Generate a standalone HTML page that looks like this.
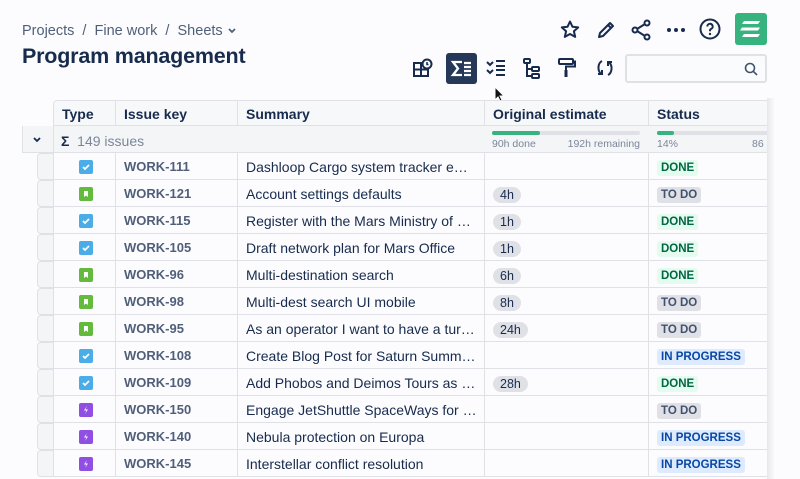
<!DOCTYPE html>
<html><head><meta charset="utf-8"><style>
*{box-sizing:border-box;margin:0;padding:0}
body{width:800px;height:479px;overflow:hidden;background:#fcfcfe;font-family:"Liberation Sans",sans-serif;color:#172b4d;position:relative}
.a{position:absolute}
.crumb{left:22px;top:23px;font-size:14.5px;color:#505f79}
h1{position:absolute;left:22px;top:44px;font-size:21.5px;font-weight:bold;color:#172b4d;letter-spacing:-0.2px}
.cell{position:absolute;height:27px;border-right:1px solid #dfe1e6;border-bottom:1px solid #dfe1e6;font-size:14px;line-height:28px;padding-left:8px;padding-right:6px;white-space:nowrap;overflow:hidden;text-overflow:ellipsis;background:#fcfcfe}
.hd{background:#f7f8fa;font-weight:bold;color:#172b4d;height:26px;line-height:27px}
.key{color:#505f79;font-weight:bold;font-size:13px;padding-left:8px}
.pill{display:inline-block;background:#dfe1e6;border-radius:8px;font-size:12.5px;line-height:16px;padding:0 7px;color:#172b4d;vertical-align:middle}
.loz{display:inline-block;font-size:11.5px;font-weight:bold;line-height:16px;padding:0 4px;border-radius:3px;vertical-align:middle}
.done{background:#e3fcef;color:#006644}
.todo{background:#dfe1e6;color:#42526e}
.prog{background:#deebff;color:#0747a6}
.ic{position:absolute;left:25px;top:7px;width:14px;height:14px;border-radius:2px}
.ic svg{display:block}
.t{background:#4bade8}.s{background:#63ba3c}.e{background:#904ee2}
.gut{position:absolute;left:37px;width:17px;height:27px;background:#f4f5f7;border:1px solid #dfe1e6;border-right:none;border-radius:4px 0 0 4px}
</style></head><body>
<div class="a crumb">Projects &nbsp;/&nbsp; Fine work &nbsp;/&nbsp; Sheets <svg width="10" height="8" viewBox="0 0 10 8"><path d="M2 2l3 3 3-3" stroke="#505f79" stroke-width="1.8" fill="none"/></svg></div>
<h1>Program management</h1>
<svg class="a" style="left:558px;top:18px" width="24" height="24" viewBox="0 0 24 24"><path d="M12 3.5l2.5 5.3 5.7.6-4.3 3.9 1.3 5.6L12 16l-5.2 2.9 1.3-5.6-4.3-3.9 5.7-.6z" fill="none" stroke="#172b4d" stroke-width="2" stroke-linejoin="round"/></svg>
<svg class="a" style="left:594px;top:18px" width="24" height="24" viewBox="0 0 24 24"><path d="M5 19l1-4L16 5l3 3L9 18z M14 7l3 3" fill="none" stroke="#172b4d" stroke-width="2" stroke-linejoin="round"/></svg>
<svg class="a" style="left:629px;top:18px" width="24" height="24" viewBox="0 0 24 24"><circle cx="6" cy="12" r="2.5" fill="none" stroke="#172b4d" stroke-width="2"/><circle cx="18" cy="5" r="2.5" fill="none" stroke="#172b4d" stroke-width="2"/><circle cx="18" cy="19" r="2.5" fill="none" stroke="#172b4d" stroke-width="2"/><path d="M8 11l8-5M8 13l8 5" stroke="#172b4d" stroke-width="2"/></svg>
<svg class="a" style="left:664px;top:18px" width="24" height="24" viewBox="0 0 24 24"><circle cx="5" cy="12" r="2" fill="#172b4d"/><circle cx="12" cy="12" r="2" fill="#172b4d"/><circle cx="19" cy="12" r="2" fill="#172b4d"/></svg>
<svg class="a" style="left:698px;top:17px" width="24" height="24" viewBox="0 0 24 24"><circle cx="12" cy="12" r="9.5" fill="none" stroke="#172b4d" stroke-width="2"/><path d="M9.3 9.5a2.7 2.7 0 1 1 3.7 2.5c-.7.3-1 .8-1 1.6v.6" fill="none" stroke="#172b4d" stroke-width="2"/><circle cx="12" cy="17" r="1.2" fill="#172b4d"/></svg>
<div class="a" style="left:735px;top:13px;width:32px;height:32px;background:#36b37e;border-radius:3px"><svg width="32" height="32" viewBox="0 0 32 32"><path d="M9 8h16l-2 3H7zM7 14.5h18l-2 3H5zM9 21h16l-2 3H7z" fill="#fff"/></svg></div>
<svg class="a" style="left:412px;top:57px" width="22" height="22" viewBox="0 0 22 22"><path d="M2 6h7v13H2zM2 12.5h14V19H9" fill="none" stroke="#172b4d" stroke-width="2"/><circle cx="15" cy="7" r="4.5" fill="none" stroke="#172b4d" stroke-width="2"/><path d="M15 5v2.5h1.5" stroke="#172b4d" stroke-width="1.5" fill="none"/></svg>
<div class="a" style="left:446px;top:53px;width:31px;height:31px;background:#253858;border-radius:3px"><svg width="31" height="31" viewBox="0 0 31 31"><path d="M16 9H7l5 6.5L7 22h9" fill="none" stroke="#fff" stroke-width="2.3"/><path d="M18 10h7M18 14h7M18 18h7M18 22h7" stroke="#fff" stroke-width="2.3"/></svg></div>
<svg class="a" style="left:484px;top:57px" width="24" height="22" viewBox="0 0 24 22"><path d="M3 5l3 3 3-3M3 13l3 3 3-3" fill="none" stroke="#172b4d" stroke-width="2"/><path d="M12 4h9M12 9h9M12 13h9M12 18h9" stroke="#172b4d" stroke-width="2"/></svg>
<svg class="a" style="left:521px;top:56px" width="22" height="24" viewBox="0 0 22 24"><rect x="3" y="3" width="6" height="4" rx="1" fill="none" stroke="#172b4d" stroke-width="2"/><path d="M6 7v13h5M6 13h5" fill="none" stroke="#172b4d" stroke-width="2"/><rect x="11" y="11" width="7" height="4" rx="1" fill="none" stroke="#172b4d" stroke-width="2"/><rect x="11" y="18" width="7" height="4" rx="1" fill="none" stroke="#172b4d" stroke-width="2"/></svg>
<svg class="a" style="left:556px;top:56px" width="22" height="24" viewBox="0 0 22 24"><rect x="3" y="3" width="14" height="5" rx="1" fill="none" stroke="#172b4d" stroke-width="2"/><path d="M17 5.5h2v5H10v4" fill="none" stroke="#172b4d" stroke-width="2"/><rect x="8.5" y="14" width="3" height="7" fill="#172b4d"/></svg>
<svg class="a" style="left:594px;top:57px" width="22" height="22" viewBox="0 0 22 22"><path d="M8 4C4 6 3 13 7 17M14 18c4-2 5-9 1-13" fill="none" stroke="#172b4d" stroke-width="2"/><path d="M4 17h4v-4M18 5h-4v4" fill="none" stroke="#172b4d" stroke-width="2"/></svg>
<div class="a" style="left:625px;top:54px;width:142px;height:29px;border:2px solid #dfe1e6;border-radius:3px;background:#fafbfc"><svg style="position:absolute;right:7px;top:6px" width="14" height="14" viewBox="0 0 14 14"><circle cx="6" cy="6" r="4.5" fill="none" stroke="#42526e" stroke-width="1.6"/><path d="M9.3 9.3L13 13" stroke="#42526e" stroke-width="1.6"/></svg></div>
<svg class="a" style="left:494px;top:86px" width="12" height="18" viewBox="0 0 12 18"><path d="M1 1v13l3-3 2.5 5 2-1L6 10h4z" fill="#111" stroke="#fff" stroke-width="1"/></svg>
<div id="tb"></div>
<div class="a" style="left:767px;top:98px;width:33px;height:381px;background:linear-gradient(90deg,#e6e7ea,#fcfcfe 8px)"></div>
<div class="cell hd" style="left:53px;top:100px;width:63px;border-top:1px solid #dfe1e6;border-left:1px solid #dfe1e6;border-top-left-radius:4px">Type</div>
<div class="cell hd" style="left:116px;top:100px;width:122px;border-top:1px solid #dfe1e6">Issue key</div>
<div class="cell hd" style="left:238px;top:100px;width:247px;border-top:1px solid #dfe1e6">Summary</div>
<div class="cell hd" style="left:485px;top:100px;width:164px;border-top:1px solid #dfe1e6">Original estimate</div>
<div class="cell hd" style="left:649px;top:100px;width:118px;border-top:1px solid #dfe1e6;border-right:none">Status</div>
<div class="a" style="left:22px;top:126px;width:745px;height:27px;background:#f4f5f7;border-bottom:1px solid #dfe1e6;border-left:1px solid #dfe1e6"></div>
<div class="a" style="left:53px;top:126px;width:1px;height:27px;background:#dfe1e6"></div>
<svg class="a" style="left:32px;top:136px" width="10" height="8" viewBox="0 0 10 8"><path d="M2 2l3 3 3-3" stroke="#172b4d" stroke-width="1.8" fill="none"/></svg>
<div class="a" style="left:61px;top:133px;font-size:14px;color:#7a869a"><b style="color:#172b4d">Σ</b>&nbsp; 149 issues</div>
<div class="a" style="left:492px;top:131px;width:148px;height:4px;background:#dfe1e6;border-radius:2px"><div style="width:48px;height:4px;background:#36b37e;border-radius:2px"></div></div>
<div class="a" style="left:492px;top:138px;font-size:10.5px;color:#7a869a;width:148px">90h done<span style="float:right">192h remaining</span></div>
<div class="a" style="left:657px;top:131px;width:110px;height:4px;background:#dfe1e6"><div style="width:17px;height:4px;background:#36b37e;border-radius:2px"></div></div>
<div class="a" style="left:657px;top:138px;font-size:10.5px;color:#7a869a">14%</div>
<div class="a" style="left:752px;top:138px;font-size:10.5px;color:#7a869a">86</div>
<script>
var rows=[["t","WORK-111","Dashloop Cargo system tracker email notifications","","done"],
["s","WORK-121","Account settings defaults","4h","todo"],
["t","WORK-115","Register with the Mars Ministry of Revenue","1h","done"],
["t","WORK-105","Draft network plan for Mars Office","1h","done"],
["s","WORK-96","Multi-destination search","6h","done"],
["s","WORK-98","Multi-dest search UI mobile","8h","todo"],
["s","WORK-95","As an operator I want to have a turbo boost","24h","todo"],
["t","WORK-108","Create Blog Post for Saturn Summer Sale","","prog"],
["t","WORK-109","Add Phobos and Deimos Tours as a Package","28h","done"],
["e","WORK-150","Engage JetShuttle SpaceWays for shuttles","","todo"],
["e","WORK-140","Nebula protection on Europa","","prog"],
["e","WORK-145","Interstellar conflict resolution","","prog"]];
var L={done:"DONE",todo:"TO DO",prog:"IN PROGRESS"};
var ico={t:'<svg width="14" height="14" viewBox="0 0 14 14"><path d="M4 7l2 2 4-4" stroke="#fff" stroke-width="1.7" fill="none"/></svg>',
s:'<svg width="14" height="14" viewBox="0 0 14 14"><path d="M5 4h4v6l-2-1.5-2 1.5z" fill="#fff"/></svg>',
e:'<svg width="14" height="14" viewBox="0 0 14 14"><path d="M8 3L5 7.5h2.5L6 11l3-4.5H6.5z" fill="#fff"/></svg>'};
var h="";
rows.forEach(function(r,i){var y=153+27*i;
h+='<div class="gut" style="top:'+y+'px"></div>';
h+='<div class="cell" style="left:53px;top:'+y+'px;width:63px;border-left:1px solid #dfe1e6"><div class="ic '+r[0]+'">'+ico[r[0]]+'</div></div>';
h+='<div class="cell key" style="left:116px;top:'+y+'px;width:122px">'+r[1]+'</div>';
h+='<div class="cell" style="left:238px;top:'+y+'px;width:247px">'+r[2]+'</div>';
h+='<div class="cell" style="left:485px;top:'+y+'px;width:164px">'+(r[3]?'<span class="pill">'+r[3]+'</span>':'')+'</div>';
h+='<div class="cell" style="left:649px;top:'+y+'px;width:118px;border-right:none"><span class="loz '+r[4]+'">'+L[r[4]]+'</span></div>';});
document.getElementById("tb").innerHTML=h;
</script>
</body></html>
